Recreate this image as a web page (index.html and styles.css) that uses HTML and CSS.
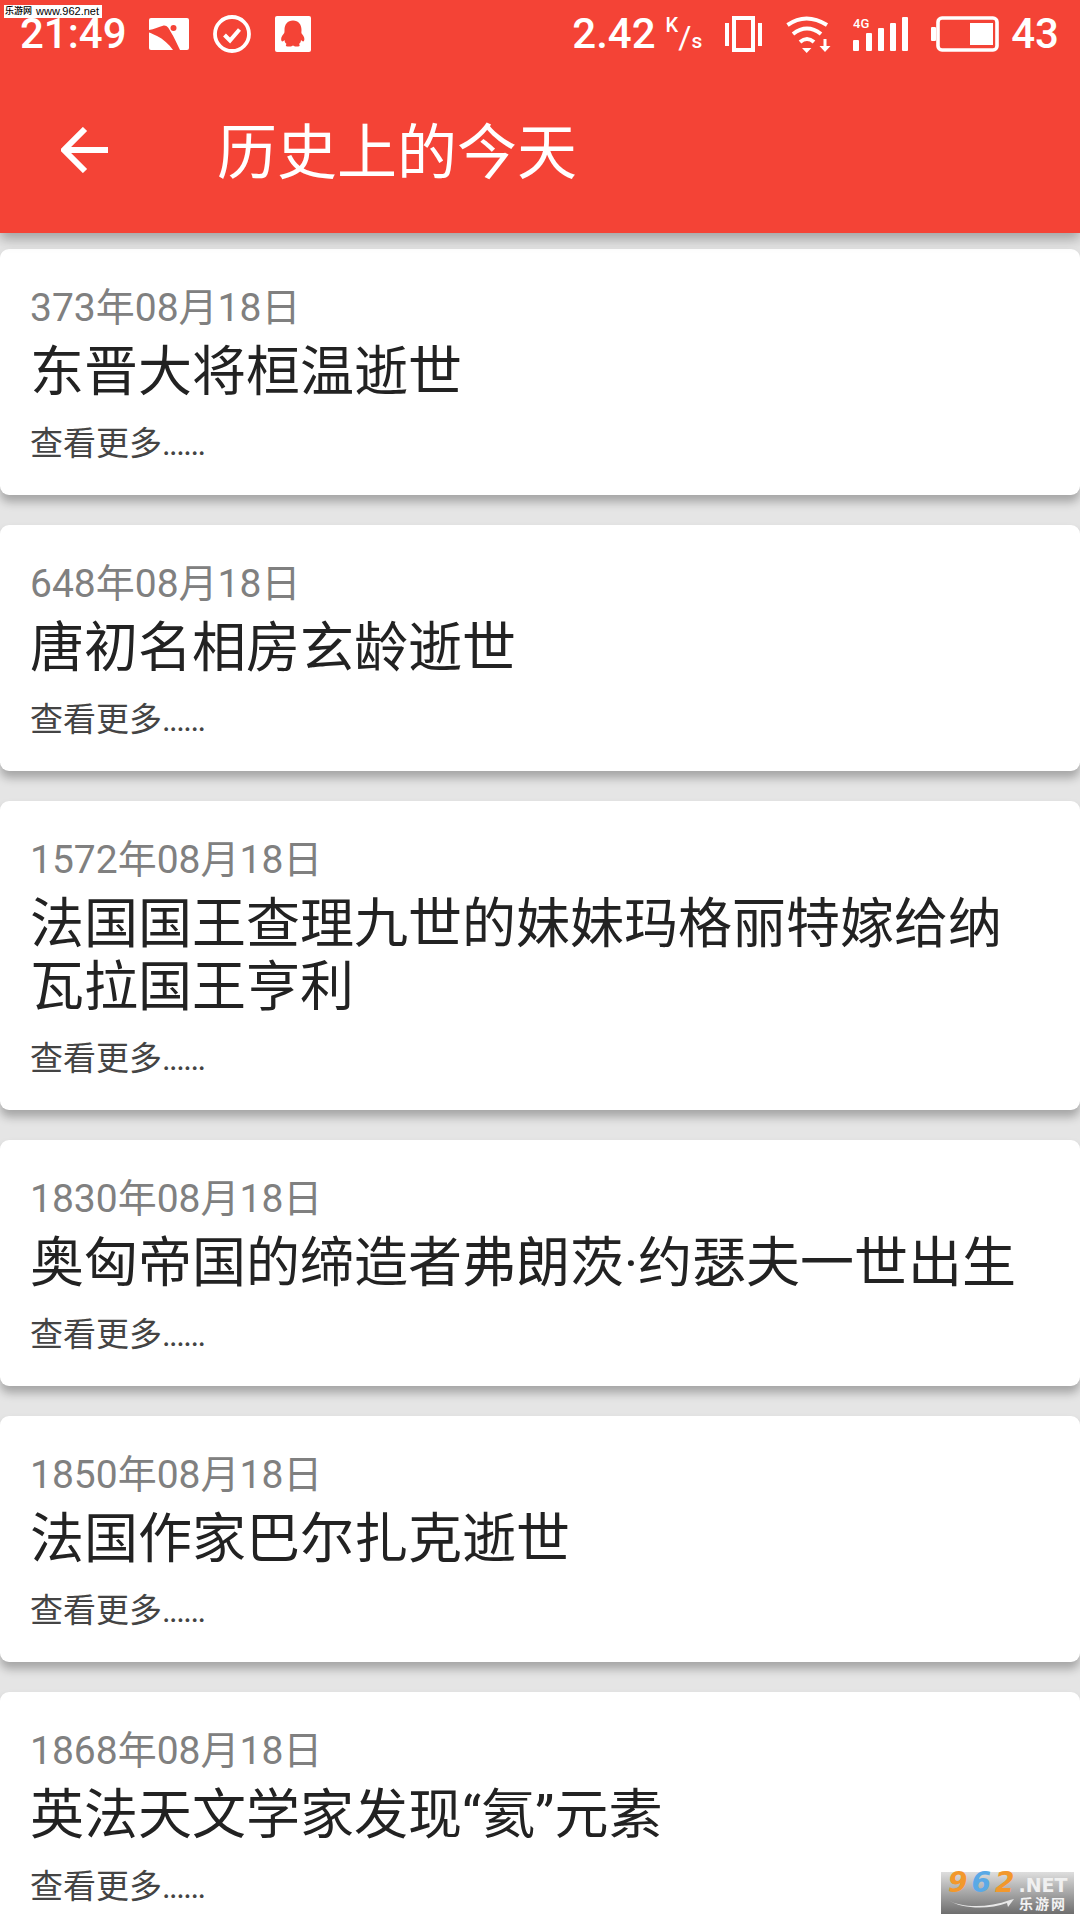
FILE: index.html
```html
<!DOCTYPE html>
<html lang="en">
<head>
    <meta charset="UTF-8">
    <meta name="viewport" content="width=device-width, initial-scale=1.0">
    <title>历史上的今天</title>
    <link rel="stylesheet" href="styles.css">
</head>
<body>
    <div class="site-mark"><span class="site-cn">乐游网</span><span class="site-url">www.962.net</span></div>
    <div class="header">
        <div class="status">
            <div class="status-left">
                <span class="time">21:49</span>
                <svg class="ico-pic" viewBox="0 0 40 32"><rect width="40" height="32" rx="2" fill="#fff"/><path fill="#f44336" d="M0 12C5 11 10 9 14 7.700c4-1 6 3 7.500 5.800C25 19 28 26 31 32h-7C20 26 14 21 8 18 5 16.500 2 15 0 14.500z"/><circle cx="24.500" cy="10" r="3" fill="#f44336"/></svg>
                <svg class="ico-check" viewBox="0 0 38 38"><circle cx="19" cy="19" r="17" fill="none" stroke="#fff" stroke-width="3.800"/><path d="M11.500 20l5.500 5.500 9.500-11" fill="none" stroke="#fff" stroke-width="4"/></svg>
                <svg class="ico-qq" viewBox="0 0 36 36"><rect width="36" height="36" rx="2" fill="#fff"/><path fill="#f44336" d="M18 4.500c-5.500 0-8.500 4-8.500 9.500 0 2 0 3-1 4-2 2-3 5-2 7 1 1 2 0 3-1 0 2 1 3 2 4-1 1-1 2.500 1 2.500h3.500l2-1 2 1H23c2 0 2-1.500 1-2.500 1-1 2-2 2-4 1 1 2 2 3 1 1-2 0-5-2-7-1-1-.5-2-.5-4 0-5.500-3-9.500-8.500-9.500z"/></svg>
            </div>
            <div class="status-right">
                <span class="speed">2.42<span class="unit-k">K</span><span class="unit-slash">/</span><span class="unit-s">s</span></span>
                <svg class="ico-vib" viewBox="0 0 37 36"><rect x="9" y="2" width="19" height="32" fill="none" stroke="#fff" stroke-width="4"/><rect y="7" width="4" height="23" fill="#fff"/><rect x="33" y="7" width="4" height="23" fill="#fff"/></svg>
                <svg class="ico-wifi" viewBox="0 0 47 38"><g fill="none" stroke="#fff" stroke-width="4"><path d="M2.500 10Q21 -3 42 10"/><path d="M8 19Q22 8 36 19"/><path d="M15 27Q22 21 29 27"/></g><path fill="#fff" d="M21.700 38L17 33h9.400zM38.500 24h3v7h4l-5.500 6-5.500-6h4z"/></svg>
                <svg class="ico-signal" viewBox="0 0 55 36"><text x="0" y="12" class="signal-label">4G</text><g fill="#fff"><rect y="24" width="6" height="11" rx="1"/><rect x="13" y="17" width="6" height="18" rx="1"/><rect x="25" y="12" width="6" height="23" rx="1"/><rect x="37" y="7" width="6" height="28" rx="1"/><rect x="49" y="1" width="6" height="34" rx="1"/></g></svg>
                <svg class="ico-batt" viewBox="0 0 68 36"><rect x="7" y="2" width="59" height="32" rx="4" fill="none" stroke="#fff" stroke-width="3.600"/><rect y="11" width="5" height="14" rx="1" fill="#fff"/><rect x="39" y="7" width="23" height="22" fill="#fff"/></svg>
                <span class="level">43</span>
            </div>
        </div>
        <div class="toolbar">
            <svg class="ico-back" viewBox="0 0 48 46"><path d="M47 23H4M24 2L3 23l21 21" fill="none" stroke="#fff" stroke-width="6"/></svg>
            <span class="toolbar-title">历史上的今天</span>
        </div>
    </div>

    <div class="list">
        <div class="card">
            <div class="date">373年08月18日</div>
            <div class="event">东晋大将桓温逝世</div>
            <div class="more">查看更多<span class="dots">......</span></div>
        </div>
        <div class="card">
            <div class="date">648年08月18日</div>
            <div class="event">唐初名相房玄龄逝世</div>
            <div class="more">查看更多<span class="dots">......</span></div>
        </div>
        <div class="card">
            <div class="date">1572年08月18日</div>
            <div class="event">法国国王查理九世的妹妹玛格丽特嫁给纳瓦拉国王亨利</div>
            <div class="more">查看更多<span class="dots">......</span></div>
        </div>
        <div class="card">
            <div class="date">1830年08月18日</div>
            <div class="event">奥匈帝国的缔造者弗朗茨·约瑟夫一世出生</div>
            <div class="more">查看更多<span class="dots">......</span></div>
        </div>
        <div class="card">
            <div class="date">1850年08月18日</div>
            <div class="event">法国作家巴尔扎克逝世</div>
            <div class="more">查看更多<span class="dots">......</span></div>
        </div>
        <div class="card">
            <div class="date">1868年08月18日</div>
            <div class="event">英法天文学家发现“氦”元素</div>
            <div class="more">查看更多<span class="dots">......</span></div>
        </div>
    </div>

    <div class="net-mark">
        <div class="net-top"><span class="net-orange">9</span><span class="net-blue">6</span><span class="net-orange">2</span><span class="net-dot">.NET</span></div>
        <div class="net-bottom">
            <svg class="net-swoosh" viewBox="0 0 66 14"><path d="M0 3C14 11 40 11 62 3l4-1-6 8-1-4C40 13 14 12 0 3z" fill="#e8e8e8"/></svg>
            <span class="net-cn">乐游网</span>
        </div>
    </div>
</body>
</html>
```

FILE: styles.css
```css
html, body {
    margin: 0;
    padding: 0;
}
body {
    position: relative;
    width: 1080px;
    height: 1920px;
    overflow: hidden;
    background-color: #e5e5e5;
    font-family: Roboto, "Noto Sans CJK SC", sans-serif;
}
svg {
    display: block;
    flex: none;
}
.header {
    height: 233px;
    background-color: #f44336;
    color: #fff;
    box-shadow: 0 6px 12px rgba(0, 0, 0, 0.3);
    position: relative;
}
.status {
    height: 67px;
    display: flex;
    justify-content: space-between;
    align-items: center;
    padding: 0 21px 0 20px;
}
.status-left, .status-right {
    display: flex;
    align-items: center;
}
.time {
    font-size: 42px;
    font-weight: 500;
    line-height: 30px;
    margin-right: 22px;
}
.ico-pic {
    width: 40px;
    height: 32px;
    margin-right: 24px;
}
.ico-check {
    width: 38px;
    height: 38px;
    margin-right: 24px;
}
.ico-qq {
    width: 36px;
    height: 36px;
}
.speed, .level {
    font-size: 42px;
    font-weight: 500;
    line-height: 30px;
}
.unit-k {
    font-size: 20px;
    line-height: 0;
    vertical-align: 16px;
    margin-left: 10px;
}
.unit-slash {
    font-size: 32px;
    font-weight: 400;
    line-height: 0;
}
.unit-s {
    font-size: 21px;
    line-height: 0;
}
.ico-vib {
    width: 37px;
    height: 36px;
    margin-left: 23px;
}
.ico-wifi {
    width: 47px;
    height: 38px;
    margin-left: 23px;
}
.ico-signal {
    width: 55px;
    height: 36px;
    margin-left: 21px;
}
.signal-label {
    font-size: 13px;
    font-weight: 500;
    fill: #fff;
}
.ico-batt {
    width: 68px;
    height: 36px;
    margin-left: 23px;
}
.level {
    margin-left: 12px;
}
.toolbar {
    height: 166px;
    display: flex;
    align-items: center;
    padding-left: 61px;
    box-sizing: border-box;
}
.ico-back {
    width: 48px;
    height: 46px;
}
.toolbar-title {
    font-size: 60px;
    margin-left: 108px;
    margin-bottom: 5px;
}
.list {
    padding-top: 16px;
}
.card {
    background-color: #fff;
    border-radius: 9px;
    box-shadow: 0 7px 10px rgba(0, 0, 0, 0.28);
    padding: 32px 30px 28px;
    margin-bottom: 30px;
}
.date {
    color: #808080;
    font-size: 39px;
    line-height: 54px;
}
.event {
    color: #222;
    font-size: 54px;
    line-height: 63px;
    margin-top: 6px;
}
.more {
    color: #444;
    font-size: 33px;
    line-height: 46px;
    margin-top: 17px;
}
.dots {
    letter-spacing: -1.600px;
}
.site-mark {
    position: absolute;
    left: 4px;
    top: 5px;
    z-index: 2;
    width: 98px;
    height: 13px;
    background-color: #fff;
    color: #000;
    line-height: 13px;
    padding-left: 1px;
    white-space: nowrap;
    overflow: hidden;
    box-sizing: border-box;
    display: flex;
    justify-content: space-between;
    font-family: "Liberation Sans", "Noto Sans CJK SC", sans-serif;
}
.site-cn {
    font-size: 9px;
    font-weight: 500;
}
.site-url {
    font-size: 11px;
    padding-right: 3px;
}
.net-mark {
    position: absolute;
    right: 6px;
    bottom: 6px;
    z-index: 2;
    width: 133px;
    height: 42px;
    background: linear-gradient(#dedede, #6e6e6e);
    font-family: "DejaVu Sans", "Noto Sans CJK SC", sans-serif;
    font-weight: bold;
}
.net-top {
    height: 22px;
    padding-left: 7px;
    font-size: 28px;
    line-height: 22px;
    font-style: italic;
    letter-spacing: 4px;
    white-space: nowrap;
}
.net-orange {
    color: #f2982c;
}
.net-blue {
    color: #5aa9e6;
}
.net-dot {
    color: #f0f0f0;
    font-size: 19px;
    font-style: normal;
    letter-spacing: 0;
}
.net-bottom {
    display: flex;
    align-items: center;
    height: 20px;
    padding-left: 7px;
}
.net-swoosh {
    width: 66px;
    height: 14px;
}
.net-cn {
    color: #f2f2f2;
    font-size: 14px;
    line-height: 16px;
    margin-left: 5px;
    letter-spacing: 2px;
}
```
